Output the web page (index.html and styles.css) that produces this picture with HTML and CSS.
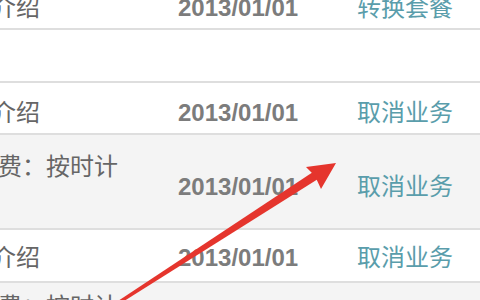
FILE: index.html
```html
<!DOCTYPE html>
<html lang="zh">
<head>
<meta charset="utf-8">
<link rel="stylesheet" href="styles.css">
</head>
<body>
<div class="page">
  <div class="list">
    <div class="row row-first">
      <span class="label">介绍</span>
      <span class="date">2013/01/01</span>
      <a class="link">转换套餐</a>
    </div>
    <div class="blank"></div>
    <div class="row">
      <span class="label">介绍</span>
      <span class="date">2013/01/01</span>
      <a class="link">取消业务</a>
    </div>
    <div class="row row-tall">
      <span class="label">费：按时计</span>
      <span class="date">2013/01/01</span>
      <a class="link">取消业务</a>
    </div>
    <div class="row row-last">
      <span class="label">介绍</span>
      <span class="date">2013/01/01</span>
      <a class="link">取消业务</a>
    </div>
    <div class="row row-gray row-peek">
      <span class="label">费：按时计</span>
    </div>
  </div>
  <svg class="arrow" width="480" height="300" viewBox="0 0 480 300">
    <polygon fill="#e5352d" points="118,301 121,303 318,179 313,172"/>
    <polygon fill="#e5352d" points="336,163 306,167 315,176 321,189"/>
  </svg>
</div>
</body>
</html>
```

FILE: styles.css
```css
html, body {
  margin: 0;
  padding: 0;
  background: #ffffff;
}
.page {
  position: relative;
  width: 480px;
  height: 300px;
  overflow: hidden;
  font-family: "Liberation Sans", "Noto Sans CJK SC", sans-serif;
  font-size: 24px;
  line-height: 24px;
}
.list {
  display: flex;
  flex-direction: column;
  margin-top: -22px;
  margin-left: -8px;
}
.row {
  display: grid;
  grid-template-columns: 186px 179px auto;
  align-items: start;
  padding: 18px 0 8px;
  border-bottom: 2px solid #dedede;
  background: #ffffff;
}
.blank {
  height: 51px;
  border-bottom: 2px solid #dedede;
  background: #ffffff;
}
.row-tall {
  background: #f4f4f4;
  padding: 20px 0 0;
  height: 73px;
  box-sizing: content-box;
  grid-template-rows: 20px 24px;
}
.row-tall .label {
  grid-row: 1 / span 2;
  grid-column: 1;
  padding-left: 6px;
}
.row-tall .date,
.row-tall .link {
  grid-row: 2;
}
.row-tall .date { grid-column: 2; }
.row-tall .link { grid-column: 3; }
.row-last {
  padding: 16px 0 11px;
}
.row-gray {
  background: #f4f4f4;
  border-bottom: none;
}
.row-peek {
  padding-top: 12px;
  padding-bottom: 20px;
}
.row-peek .label {
  padding-left: 6px;
}
.label {
  color: #666666;
  white-space: nowrap;
}
.date {
  color: #7c7c7c;
  font-weight: bold;
  white-space: nowrap;
}
.link {
  color: #5a9dab;
  white-space: nowrap;
  text-decoration: none;
}
.arrow {
  position: absolute;
  left: 0;
  top: 0;
}
```
